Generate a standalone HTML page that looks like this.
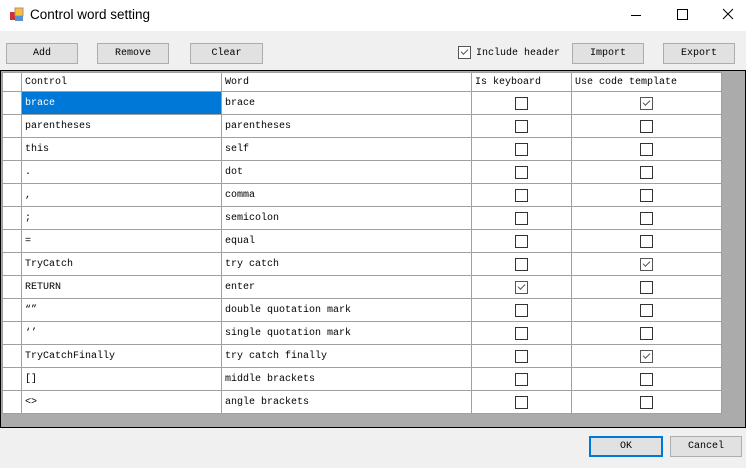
<!DOCTYPE html><html><head><style>
body{margin:0;width:746px;height:468px;background:#f0f0f0;position:relative;overflow:hidden;font-family:"Liberation Mono","Noto Sans CJK SC",monospace;font-size:10px;color:#000}
.a{position:absolute}
.btn{position:absolute;height:19px;background:#e1e1e1;border:1px solid #adadad;text-align:center;line-height:20px;box-sizing:content-box}
.cb{position:absolute;width:11px;height:11px;border:1px solid #333;background:#fff}
.ck::after{content:"";position:absolute;left:2px;top:1px;width:6px;height:3px;border-left:1px solid #555;border-bottom:1px solid #555;transform:rotate(-45deg);transform-origin:center;top:2px}
.ck{border-color:#555}
table{border-collapse:collapse;position:absolute;left:2px;top:72px;background:#fff}
td{border:1px solid #a0a0a0;height:21px;padding:1px 0 0 3px;white-space:nowrap;position:relative}
tr.h td{height:18px;padding-top:0}
</style></head><body>
<div class="a" style="left:0;top:0;width:746px;height:31px;background:#fff"></div>
<svg class="a" style="left:9px;top:7px" width="16" height="16"><rect x="1" y="5" width="5" height="8" fill="#c33"/><rect x="6" y="1" width="8" height="8" fill="#f3c230" stroke="#b88" /><rect x="6" y="9" width="8" height="5" fill="#5a8fd8"/></svg>
<div class="a" style="left:30px;top:7px;font:13.5px 'Liberation Sans',sans-serif">Control word setting</div>
<div class="a" style="left:631px;top:15px;width:10px;height:1px;background:#000"></div>
<div class="a" style="left:677px;top:9px;width:9px;height:9px;border:1px solid #000"></div>
<svg class="a" style="left:722px;top:8px" width="12" height="12"><path d="M1 1L11 11M11 1L1 11" stroke="#000"/></svg>
<div class="btn" style="left:6px;top:43px;width:70px">Add</div>
<div class="btn" style="left:97px;top:43px;width:70px">Remove</div>
<div class="btn" style="left:190px;top:43px;width:71px">Clear</div>
<div class="cb ck" style="left:458px;top:46px"></div>
<div class="a" style="left:476px;top:48px">Include header</div>
<div class="btn" style="left:572px;top:43px;width:70px">Import</div>
<div class="btn" style="left:663px;top:43px;width:70px">Export</div>
<div class="a" style="left:0;top:70px;width:744px;height:356px;background:#ababab;border:1px solid #000"></div>
<table>
<tr class="h"><td style="width:15px"></td><td style="width:196px">Control</td><td style="width:246px">Word</td><td style="width:96px">Is keyboard</td><td style="width:146px">Use code template</td></tr>
<tr><td></td><td style="background:#0078d7;color:#fff">brace</td><td>brace</td><td><div class="cb" style="left:43px;top:5px"></div></td><td><div class="cb ck" style="left:68px;top:5px"></div></td></tr>
<tr><td></td><td>parentheses</td><td>parentheses</td><td><div class="cb" style="left:43px;top:5px"></div></td><td><div class="cb" style="left:68px;top:5px"></div></td></tr>
<tr><td></td><td>this</td><td>self</td><td><div class="cb" style="left:43px;top:5px"></div></td><td><div class="cb" style="left:68px;top:5px"></div></td></tr>
<tr><td></td><td>.</td><td>dot</td><td><div class="cb" style="left:43px;top:5px"></div></td><td><div class="cb" style="left:68px;top:5px"></div></td></tr>
<tr><td></td><td>,</td><td>comma</td><td><div class="cb" style="left:43px;top:5px"></div></td><td><div class="cb" style="left:68px;top:5px"></div></td></tr>
<tr><td></td><td>;</td><td>semicolon</td><td><div class="cb" style="left:43px;top:5px"></div></td><td><div class="cb" style="left:68px;top:5px"></div></td></tr>
<tr><td></td><td>=</td><td>equal</td><td><div class="cb" style="left:43px;top:5px"></div></td><td><div class="cb" style="left:68px;top:5px"></div></td></tr>
<tr><td></td><td>TryCatch</td><td>try catch</td><td><div class="cb" style="left:43px;top:5px"></div></td><td><div class="cb ck" style="left:68px;top:5px"></div></td></tr>
<tr><td></td><td>RETURN</td><td>enter</td><td><div class="cb ck" style="left:43px;top:5px"></div></td><td><div class="cb" style="left:68px;top:5px"></div></td></tr>
<tr><td></td><td>“”</td><td>double quotation mark</td><td><div class="cb" style="left:43px;top:5px"></div></td><td><div class="cb" style="left:68px;top:5px"></div></td></tr>
<tr><td></td><td>‘’</td><td>single quotation mark</td><td><div class="cb" style="left:43px;top:5px"></div></td><td><div class="cb" style="left:68px;top:5px"></div></td></tr>
<tr><td></td><td>TryCatchFinally</td><td>try catch finally</td><td><div class="cb" style="left:43px;top:5px"></div></td><td><div class="cb ck" style="left:68px;top:5px"></div></td></tr>
<tr><td></td><td>[]</td><td>middle brackets</td><td><div class="cb" style="left:43px;top:5px"></div></td><td><div class="cb" style="left:68px;top:5px"></div></td></tr>
<tr><td></td><td>&lt;&gt;</td><td>angle brackets</td><td><div class="cb" style="left:43px;top:5px"></div></td><td><div class="cb" style="left:68px;top:5px"></div></td></tr>
</table>
<div class="btn" style="left:589px;top:436px;width:70px;height:17px;line-height:18px;border:2px solid #0078d7">OK</div>
<div class="btn" style="left:670px;top:436px;width:70px">Cancel</div>
</body></html>
